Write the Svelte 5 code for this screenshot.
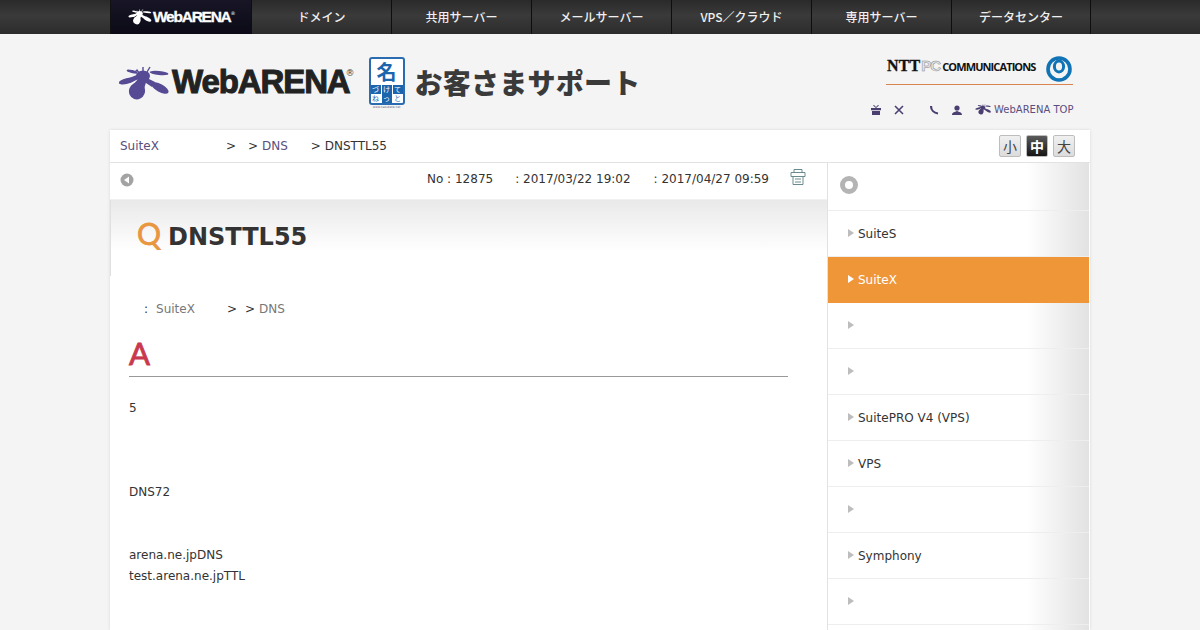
<script>
	const navItems = ['ドメイン', '共用サーバー', 'メールサーバー', 'VPS／クラウド', '専用サーバー', 'データセンター'];
	const sideItems = [
		{ label: 'SuiteS' },
		{ label: 'SuiteX', active: true },
		{ label: '' },
		{ label: '' },
		{ label: 'SuitePRO V4 (VPS)' },
		{ label: 'VPS' },
		{ label: '' },
		{ label: 'Symphony' },
		{ label: '' },
		{ label: '' }
	];
</script>

{#snippet bug(cls)}
	<svg class={cls} viewBox="0 0 52 35" aria-hidden="true">
		<g fill="currentColor">
			<ellipse cx="24" cy="10" rx="7" ry="5.500" />
			<!-- bottom drop -->
			<ellipse cx="18" cy="25" rx="8" ry="8.500" transform="rotate(20 18 25)" />
			<path d="M20 12 L28 13 L25 23 L13 20 Z" />
			<!-- right drop -->
			<ellipse cx="41" cy="22" rx="9.500" ry="4" transform="rotate(28 41 22)" />
			<path d="M26 11 L36 16 L33 21 L24 15 Z" />
			<!-- side arms -->
			<ellipse cx="8" cy="15" rx="8.500" ry="2.800" transform="rotate(-14 8 15)" />
			<path d="M8 13 L20 8 L20 13 L10 17 Z" />
			<ellipse cx="40" cy="7" rx="9.500" ry="2" transform="rotate(6 40 7)" />
			<ellipse cx="13" cy="5.500" rx="5.500" ry="1.500" transform="rotate(14 13 5.500)" />
		</g>
		<g stroke="currentColor" stroke-width="1.400" fill="none">
			<path d="M20 7 L18 4 L16 6" />
			<path d="M28 6 L31 1" />
			<path d="M24 6 L24 1" />
			<path d="M18 7 L13 5" />
		</g>
	</svg>
{/snippet}

<div class="page">
	<nav class="nav">
		<div class="nav-inner">
			<div class="nav-logo">
				{@render bug('nav-bug')}
				<span class="nav-logo-text">WebARENA</span><span class="nav-reg">®</span>
			</div>
			{#each navItems as item}
				<div class="nav-item">{item}</div>
			{/each}
		</div>
	</nav>

	<div class="wrap">
		<header class="header">
			<div class="brand">
				{@render bug('brand-bug')}
				<span class="brand-text">WebARENA</span><span class="brand-reg">®</span>
				<div class="name-badge">
					<div class="name-box">
						<div class="name-top">名</div>
						<div class="name-grid">
							<span class="on">づ</span><span class="on">け</span><span class="on">て</span>
							<span>ね</span><span class="on">っ</span><span>と</span>
						</div>
					</div>
					<div class="name-url">www.nazukete.net</div>
				</div>
				<span class="support">お客さまサポート</span>
			</div>
			<div class="corp">
				<div class="corp-logo">
					<span class="ntt">NTT</span><span class="pc">PC</span><span class="comm">COMMUNICATIONS</span>
					<svg class="ntt-ring" viewBox="0 0 26 26" aria-hidden="true">
						<circle cx="13" cy="13" r="11" fill="none" stroke="#0f73b5" stroke-width="3.600" />
						<ellipse cx="13" cy="10.500" rx="4.600" ry="5.400" fill="none" stroke="#0f73b5" stroke-width="3" />
					</svg>
				</div>
				<div class="corp-links">
					<svg class="ico gift" viewBox="0 0 10 10"><path fill="#4b3f72" d="M0 3h10v2.300H0zM1 6h8v4H1zM2 .5 5 3 8 .5 7 0 5 2 3 0z" /></svg>
					<svg class="ico tools" viewBox="0 0 10 10"><path stroke="#4b3f72" stroke-width="1.600" fill="none" d="M1 1l8 8M9 1L1 9" /></svg>
					<svg class="ico phone" viewBox="0 0 10 10"><path fill="none" stroke="#4b3f72" stroke-width="2.200" d="M2 1c0 4 3 7 7 7.500" /></svg>
					<svg class="ico person" viewBox="0 0 10 10"><circle cx="5" cy="3" r="2.600" fill="#4b3f72" /><path fill="#4b3f72" d="M0 10c0-3 3-3 5-4 2 1 5 1 5 4z" /></svg>
					{@render bug('link-bug')}
					<span class="top-link">WebARENA TOP</span>
				</div>
			</div>
		</header>

		<main class="card">
			<div class="crumbs">
				<span class="link">SuiteX</span>
				<span class="c1">&gt;</span>
				<span class="c2">&gt;</span>
				<span class="link c3">DNS</span>
				<span class="c4">&gt; DNSTTL55</span>
				<div class="sizes">
					<span class="size">小</span>
					<span class="size current">中</span>
					<span class="size">大</span>
				</div>
			</div>

			<div class="columns">
				<article class="article">
					<div class="meta">
						<svg class="back" viewBox="0 0 14 14"><circle cx="7" cy="7" r="6.500" fill="#a3a3a3" /><path d="M9 3.500v7L4 7z" fill="#fff" /></svg>
						<div class="meta-right">
							<span class="meta-no">No : 12875</span>
							<span>: 2017/03/22 19:02</span>
							<span>: 2017/04/27 09:59</span>
							<svg class="print" viewBox="0 0 16 16" fill="none" stroke="#6b8a90" stroke-width="1">
								<path d="M4 .5h8v3H4zM1 3.500h14v4H1zM3 7.500h10v8H3zM5 10h6M5 13h6" />
							</svg>
						</div>
					</div>

					<div class="question">
						<span class="q">Q</span>
						<h1>DNSTTL55</h1>
					</div>

					<div class="category">
						<span class="cat-colon">:</span>
						<span class="cat-link">SuiteX</span>
						<span class="cat-a">&gt;</span>
						<span class="cat-b">&gt;</span>
						<span class="cat-link cat-dns">DNS</span>
					</div>

					<div class="answer-head"><span class="a">A</span></div>

					<div class="answer">
						5<br /><br /><br /><br />
						DNS72<br /><br /><br />
						arena.ne.jpDNS<br />
						test.arena.ne.jpTTL
					</div>
				</article>

				<aside class="side">
					<div class="side-head">
						<span class="disc"></span>
					</div>
					{#each sideItems as item}
						<div class="side-row" class:active={item.active}>
							<span class="arrow"></span>
							<span>{item.label}</span>
						</div>
					{/each}
				</aside>
			</div>
		</main>
	</div>
</div>

<style>
	:global(html),
	:global(body) {
		margin: 0;
		height: 630px;
		overflow: hidden;
	}

	.page {
		height: 630px;
		overflow: hidden;
		background: #f4f4f4;
		font-family: 'DejaVu Sans', 'Noto Sans CJK JP', sans-serif;
		font-size: 12px;
		color: #333;
	}

	/* Top bar */
	.nav {
		height: 34px;
		background: linear-gradient(#2a2a2a, #3a3a3a 45%, #2c2c2c);
	}

	.nav-inner {
		width: 980px;
		margin: 0 auto;
		height: 34px;
		display: flex;
		border-left: 1px solid #111;
		box-sizing: border-box;
	}

	.nav-logo {
		width: 140px;
		flex-shrink: 0;
		display: flex;
		align-items: center;
		padding-left: 17px;
		box-sizing: border-box;
		background: linear-gradient(#181626, #0b0a16);
		color: #fff;
	}

	:global(.nav-bug) {
		width: 25px;
		height: 16px;
		flex-shrink: 0;
	}

	.nav-logo-text {
		font-family: 'Liberation Sans', sans-serif;
		font-weight: 700;
		font-size: 15.500px;
		letter-spacing: -1.250px;
		-webkit-text-stroke: 0.3px #fff;
	}

	.nav-reg {
		font-size: 5px;
		margin-top: -8px;
	}

	.nav-item {
		width: 140px;
		flex-shrink: 0;
		box-sizing: border-box;
		border-left: 1px solid #0e0e0e;
		text-align: center;
		line-height: 33px;
		font-family: 'Noto Sans CJK JP', sans-serif;
		font-weight: 500;
		color: #f0f0f0;
		font-size: 12px;
	}

	.nav-item:last-child {
		border-right: 1px solid #0e0e0e;
	}

	/* Header */
	.wrap {
		width: 980px;
		margin: 0 auto;
	}

	.header {
		height: 96px;
		display: flex;
		justify-content: space-between;
	}

	.brand {
		display: flex;
		align-items: flex-start;
		padding: 23px 0 0 9px;
	}

	:global(.brand-bug) {
		width: 52px;
		height: 35px;
		margin-top: 9px;
		color: #564a94;
		flex-shrink: 0;
	}

	.brand-text {
		font-family: 'Liberation Sans', sans-serif;
		font-weight: 700;
		font-size: 33px;
		line-height: 40px;
		letter-spacing: -1.100px;
		-webkit-text-stroke: 1px #222;
		color: #222;
		margin: 5px 0 0 1px;
	}

	.brand-reg {
		font-size: 9px;
		line-height: 10px;
		margin: 11px 0 0 -4px;
		color: #444;
	}

	.name-badge {
		margin-left: 14px;
	}

	.name-box {
		width: 36px;
		height: 48px;
		box-sizing: border-box;
		border: 2px solid #2b6cb0;
		border-radius: 3px;
		background: #fff;
		overflow: hidden;
	}

	.name-top {
		height: 26px;
		line-height: 25px;
		text-align: center;
		font-family: 'Noto Sans CJK JP', sans-serif;
		font-size: 20px;
		font-weight: 700;
		color: #1c65ad;
	}

	.name-grid {
		display: grid;
		grid-template-columns: repeat(3, 1fr);
		grid-auto-rows: 9px;
		gap: 0 1px;
		font-size: 7px;
		line-height: 9px;
		text-align: center;
		color: #1c65ad;
		font-family: 'Noto Sans CJK JP', sans-serif;
	}

	.name-grid span {
		overflow: hidden;
	}

	.name-grid .on {
		background: #1c65ad;
		color: #fff;
	}

	.name-url {
		font-size: 3px;
		line-height: 4px;
		text-align: center;
		color: #667;
		white-space: nowrap;
	}

	.support {
		font-family: 'Noto Sans CJK JP', sans-serif;
		font-weight: 900;
		font-size: 28px;
		letter-spacing: 0.250px;
		line-height: 40px;
		color: #3a3a3a;
		margin: 5px 0 0 10px;
		white-space: nowrap;
	}

	.corp {
		width: 187px;
		margin-right: 17px;
		padding-top: 22px;
		box-sizing: border-box;
	}

	.corp-logo {
		display: flex;
		align-items: center;
		height: 29px;
		box-sizing: border-box;
		border-bottom: 1px solid #d8854f;
		padding-left: 1px;
		position: relative;
		white-space: nowrap;
		color: #111;
	}

	.ntt {
		font-family: 'Liberation Serif', serif;
		font-weight: 700;
		font-size: 16px;
		letter-spacing: 0.100px;
		margin-top: -9px;
		-webkit-text-stroke: 0.3px #111;
	}

	.pc {
		font-family: 'Liberation Sans', sans-serif;
		font-weight: 700;
		font-size: 15px;
		color: #e6e6e6;
		-webkit-text-stroke: 0.5px #888;
		margin: -9px 0 0 1px;
		letter-spacing: -0.900px;
	}

	.comm {
		font-family: 'Open Sans', sans-serif;
		font-weight: 700;
		font-size: 11px;
		letter-spacing: -0.900px;
		margin: -7px 0 0 2px;
	}

	.ntt-ring {
		position: absolute;
		right: 1px;
		top: 0;
		width: 26px;
		height: 26px;
	}

	.corp-links {
		display: flex;
		align-items: center;
		height: 20px;
		margin-top: 15px;
		position: relative;
		left: -15px;
		width: 202px;
	}

	.ico {
		width: 10px;
		height: 10px;
		flex-shrink: 0;
	}

	.tools {
		margin-left: 13px;
	}

	.phone {
		margin-left: 25px;
	}

	.person {
		margin-left: 13px;
	}

	:global(.link-bug) {
		width: 17px;
		height: 11px;
		margin: -2px 0 0 13px;
		color: #4b3f72;
		flex-shrink: 0;
	}

	.top-link {
		font-size: 10px;
		color: #5a4e7e;
		margin: -1px 0 0 2px;
		white-space: nowrap;
	}

	/* Main card */
	.card {
		background: #fff;
		box-shadow: 0 0 3px #d8d8d8;
		height: 500px;
		overflow: hidden;
	}

	.crumbs {
		height: 33px;
		box-sizing: border-box;
		border-bottom: 1px solid #e2e2e2;
		display: flex;
		align-items: center;
		padding-left: 10px;
		padding-bottom: 1px;
		white-space: nowrap;
		color: #333;
	}

	.link {
		color: #5a4e7e;
	}

	.c1 {
		margin-left: 67px;
	}

	.c2 {
		margin-left: 12px;
	}

	.c3 {
		margin-left: 4px;
	}

	.c4 {
		margin-left: 23px;
	}

	.sizes {
		margin-left: auto;
		margin-right: 15px;
		display: flex;
		gap: 5px;
	}

	.size {
		width: 22px;
		height: 22px;
		box-sizing: border-box;
		border: 1px solid #bdbdbd;
		border-radius: 2px;
		background: linear-gradient(#f0f0f0, #dcdcdc);
		text-align: center;
		line-height: 20px;
		font-family: 'Noto Sans CJK JP', sans-serif;
		font-size: 14px;
		color: #444;
	}

	.size.current {
		background: linear-gradient(#5a5a5a, #151515);
		color: #fff;
		font-weight: 700;
	}

	.columns {
		display: flex;
	}

	.article {
		width: 717px;
		flex-shrink: 0;
	}

	.meta {
		height: 37px;
		box-sizing: border-box;
		border-bottom: 1px solid #f1f1f1;
		display: flex;
		align-items: flex-start;
		justify-content: space-between;
		padding: 10px 21px 0 10px;
	}

	.back {
		width: 14px;
		height: 14px;
	}

	.meta-right {
		display: flex;
		gap: 23px;
		margin-top: -1px;
		line-height: 14px;
	}

	.meta-no {
		margin-right: -1px;
	}

	.print {
		width: 16px;
		height: 16px;
		margin: -3px 0 0 -2px;
	}

	.question {
		height: 76px;
		box-sizing: border-box;
		padding: 14px 0 0 26px;
		display: flex;
		align-items: flex-start;
		background: linear-gradient(#e9e9e9, #fff 52px);
		border-left: 1px solid #e0e0e0;
	}

	.q {
		font-family: Lato, sans-serif;
		font-weight: 400;
		font-size: 30px;
		line-height: 38px;
		color: #e8963f;
		-webkit-text-stroke: 0.8px #e8963f;
	}

	.question h1 {
		margin: 0 0 0 7px;
		font-size: 24px;
		line-height: 46px;
		font-weight: 700;
		color: #333;
	}

	.category {
		margin-top: 25px;
		height: 16px;
		line-height: 16px;
		padding-left: 34px;
		white-space: nowrap;
		display: flex;
	}

	.cat-link {
		color: #777;
	}

	.cat-colon {
		margin-right: 8px;
	}

	.cat-a {
		margin-left: 32px;
	}

	.cat-b {
		margin-left: 8px;
	}

	.cat-dns {
		margin-left: 4px;
	}

	.answer-head {
		margin: 20px 39px 0 19px;
		height: 40px;
		box-sizing: border-box;
		border-bottom: 1px solid #999;
	}

	.a {
		display: block;
		font-family: Lato, sans-serif;
		font-weight: 400;
		font-size: 31px;
		line-height: 32px;
		color: #c9394e;
		-webkit-text-stroke: 0.9px #c9394e;
	}

	.answer {
		margin: 21px 0 0 19px;
		line-height: 21px;
	}

	/* Sidebar */
	.side {
		width: 262px;
		border-left: 1px solid #e2e2e2;
		margin-right: 1px;
		box-sizing: border-box;
	}

	.side-head,
	.side-row {
		height: 46px;
		box-sizing: border-box;
		position: relative;
		background: linear-gradient(90deg, #fff 76%, #e2e2e2);
	}

	.side-head {
		height: 48px;
		border-bottom: 1px solid #eee;
		padding: 13px 0 0 12px;
	}

	.disc {
		display: block;
		width: 18px;
		height: 18px;
		box-sizing: border-box;
		border: 5px solid #b4b4b4;
		border-radius: 50%;
		background: #fff;
	}

	.side-row {
		display: flex;
		align-items: center;
		padding-left: 30px;
		border-bottom: 1px solid #eee;
		white-space: nowrap;
	}

	.side-row.active {
		background: #ef9639;
		color: #fff;
		border-bottom: 0;
	}

	.arrow {
		position: absolute;
		left: 20px;
		top: 18px;
		width: 0;
		height: 0;
		border-left: 6px solid #bdbdbd;
		border-top: 4px solid transparent;
		border-bottom: 4px solid transparent;
	}

	.active .arrow {
		border-left-color: #fff;
	}
</style>
